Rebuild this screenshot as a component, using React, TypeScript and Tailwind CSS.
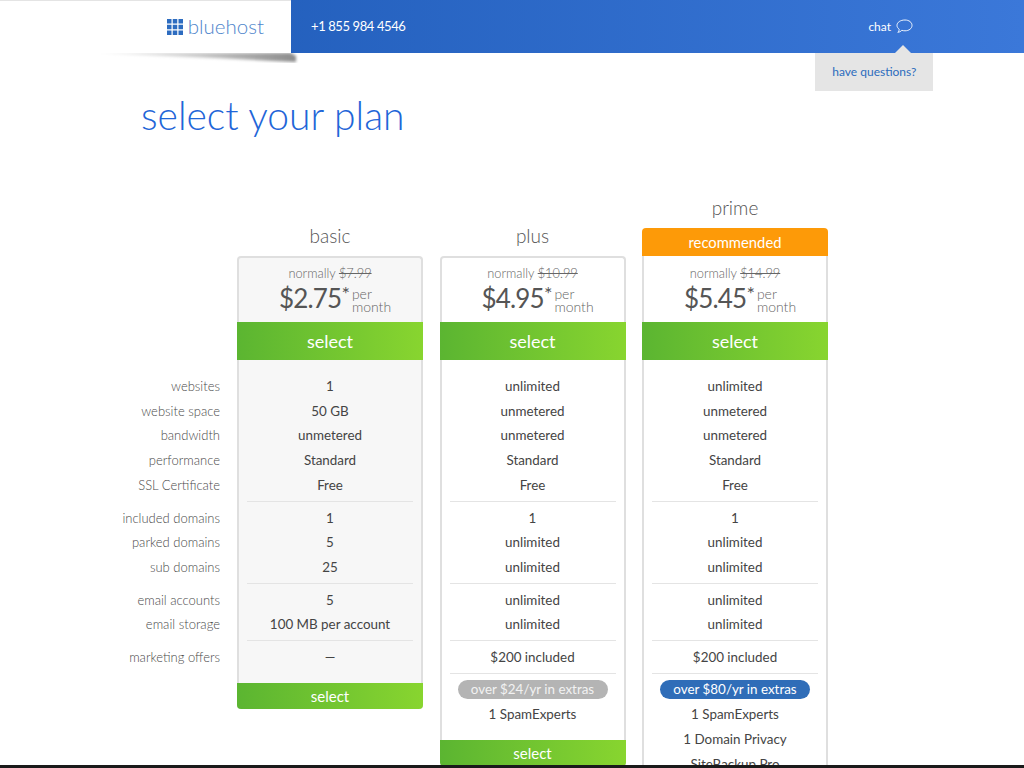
import React from 'react';

type Plan = {
  name: string;
  normally: string;
  price: string;
  highlighted?: boolean;
  shaded?: boolean;
  pill?: { text: string; className: string };
  extras?: string[];
  sections: string[][];
};

const labels = [
  ['websites', 'website space', 'bandwidth', 'performance', 'SSL Certificate'],
  ['included domains', 'parked domains', 'sub domains'],
  ['email accounts', 'email storage'],
  ['marketing offers'],
];

const plans: Plan[] = [
  {
    name: 'basic',
    normally: '$7.99',
    price: '$2.75',
    shaded: true,
    sections: [
      ['1', '50 GB', 'unmetered', 'Standard', 'Free'],
      ['1', '5', '25'],
      ['5', '100 MB per account'],
      ['—'],
    ],
  },
  {
    name: 'plus',
    normally: '$10.99',
    price: '$4.95',
    pill: { text: 'over $24/yr in extras', className: 'bg-[#b4b4b4] text-[#f2f2f2]' },
    extras: ['1 SpamExperts'],
    sections: [
      ['unlimited', 'unmetered', 'unmetered', 'Standard', 'Free'],
      ['1', 'unlimited', 'unlimited'],
      ['unlimited', 'unlimited'],
      ['$200 included'],
    ],
  },
  {
    name: 'prime',
    normally: '$14.99',
    price: '$5.45',
    highlighted: true,
    pill: { text: 'over $80/yr in extras', className: 'bg-[#2f6db8] text-white' },
    extras: ['1 SpamExperts', '1 Domain Privacy', 'SiteBackup Pro'],
    sections: [
      ['unlimited', 'unmetered', 'unmetered', 'Standard', 'Free'],
      ['1', 'unlimited', 'unlimited'],
      ['unlimited', 'unlimited'],
      ['$200 included'],
    ],
  },
];

const Row: React.FC<{ children: React.ReactNode; className?: string }> = ({ children, className = '' }) => (
  <div className={`h-[24.8px] leading-[24.8px] whitespace-nowrap ${className}`}>{children}</div>
);

const SelectButton: React.FC<{ small?: boolean }> = ({ small }) => (
  <div
    className={`bg-gradient-to-r from-[#5bb531] to-[#88d52f] text-center text-white ${
      small
        ? 'h-[26px] text-[15px] leading-[27px] rounded-b-[4px] -mx-[2px]'
        : 'h-[38px] text-[18px] leading-[39px] -mx-[2px]'
    }`}
  >
    select
  </div>
);

const PlanCard: React.FC<{ plan: Plan }> = ({ plan }) => (
  <div className={`w-[186px] flex flex-col ${plan.highlighted ? '' : 'pt-[28px]'}`}>
    <div className="h-[33px] text-center text-[19px] font-light leading-[26px] text-[#555]">{plan.name}</div>
    {plan.highlighted && (
      <div className="h-[28px] rounded-t-[4px] bg-[#fd9a08] text-center text-[14.8px] leading-[28px] text-white">
        recommended
      </div>
    )}
    <div
      className={`border-x-2 border-b-0 border-[#dfdfdf] ${plan.highlighted ? '' : 'border-t-2 rounded-t-[4px]'} ${
        plan.shaded ? 'bg-[#f7f7f7]' : 'bg-white'
      } ${plan.extras ? '' : 'rounded-b-[4px]'}`}
    >
      <div className={`flex flex-col items-center ${plan.highlighted ? 'h-[66px] pt-[8px]' : 'h-[64px] pt-[6px]'}`}>
        <div className="h-[18px] text-[12.8px] font-light leading-[18px] text-[#666]">
          normally <span className="line-through">{plan.normally}</span>
        </div>
        <div className="ml-[10px] -mt-[2px] flex items-start text-[#555]">
          <span className="text-[26px] leading-[36px] tracking-[-0.8px]">{plan.price}</span>
          <span className="text-[20px] leading-[26px]">*</span>
          <span className="ml-[2px] mt-[7px] text-[14px] font-light leading-[13px] text-[#666]">
            per
            <br />
            month
          </span>
        </div>
      </div>
      <SelectButton />
      <div
        className={`px-[8px] pt-[13.9px] text-center text-[13.4px] text-[#444] ${plan.extras ? 'pb-[13px]' : 'pb-[13.3px]'}`}
      >
        {plan.sections.map((rows, i) => (
          <div key={i} className={i > 0 ? 'mt-[3px] border-t border-[#e4e4e4] pt-[3.7px]' : ''}>
            {rows.map((value, j) => (
              <Row key={j}>{value}</Row>
            ))}
          </div>
        ))}
        {plan.pill && (
          <div className="mt-[3px] border-t border-[#e4e4e4] pt-[6.2px]">
            <div className={`mx-[8px] h-[19px] rounded-full text-[13.4px] leading-[19px] ${plan.pill.className}`}>
              {plan.pill.text}
            </div>
            <div className="mt-[3.5px]">
              {plan.extras?.map((extra) => (
                <Row key={extra}>{extra}</Row>
              ))}
            </div>
          </div>
        )}
      </div>
      <SelectButton small />
    </div>
  </div>
);

export default function App() {
  return (
    <div className="flex h-[768px] flex-col overflow-hidden bg-white font-['Lato',sans-serif]">
      <div className="relative min-h-0 flex-1 overflow-hidden">
        {/* header */}
        <header className="relative flex h-[53px] bg-gradient-to-r from-[#1b58b4] to-[#3b78d9]">
          <svg className="absolute left-[90px] top-[53px]" width="215" height="16" viewBox="0 0 215 16">
            <defs>
              <linearGradient id="shade" x1="0" x2="1" y1="0" y2="0">
                <stop offset="0" stopColor="#f4f4f4" />
                <stop offset="0.5" stopColor="#c8c8c8" />
                <stop offset="1" stopColor="#8c8c8c" />
              </linearGradient>
              <filter id="soft">
                <feGaussianBlur stdDeviation="1.4" />
              </filter>
            </defs>
            <path d="M6 0 H201 L206 3 V9 Q110 4 6 0 Z" fill="url(#shade)" filter="url(#soft)" />
          </svg>
          <div className="relative flex h-[53px] w-[291px] items-center justify-end border-t border-[#e4e4e4] bg-white pr-[27px]">
            <svg width="16" height="16" viewBox="0 0 16 16" className="mr-[5px]" fill="#2d6cc0">
              <rect x="0" y="0" width="4.5" height="4.5" />
              <rect x="5.75" y="0" width="4.5" height="4.5" />
              <rect x="11.5" y="0" width="4.5" height="4.5" />
              <rect x="0" y="5.75" width="4.5" height="4.5" />
              <rect x="5.75" y="5.75" width="4.5" height="4.5" />
              <rect x="11.5" y="5.75" width="4.5" height="4.5" />
              <rect x="0" y="11.5" width="4.5" height="4.5" />
              <rect x="5.75" y="11.5" width="4.5" height="4.5" />
              <rect x="11.5" y="11.5" width="4.5" height="4.5" />
            </svg>
            <span className="pb-[2px] text-[20.5px] font-light leading-none text-[#4f86cc]">bluehost</span>
          </div>
          <div className="ml-[20px] flex items-center text-[13px] tracking-[-0.4px] text-white">+1 855 984 4546</div>
          <div className="relative ml-auto mr-[111px] flex items-center text-[12px] text-white">
            chat
            <svg width="17" height="15" viewBox="0 0 17 15" className="ml-[5px]" fill="none" stroke="#ffffff" strokeWidth="0.9">
              <path d="M9 1 C13 1 16 3.3 16 6.4 C16 9.5 13 11.8 9 11.8 C7.8 11.8 6.8 11.6 5.8 11.3 C4.8 12.4 3.4 13.2 1.8 13.3 C2.8 12.4 3.2 11.3 3.2 10.2 C1.8 9.2 1 7.9 1 6.4 C1 3.3 4.4 1 9 1 Z" />
            </svg>
            {/* tooltip */}
            <div className="absolute left-[-53px] top-[53px] h-[38px] w-[118px] bg-[#e5e5e5] text-center text-[12px] leading-[38px] text-[#2c6cbd]">
              <span className="absolute left-[80px] top-[-8px] h-0 w-0 border-x-[8px] border-b-[8px] border-x-transparent border-b-[#e5e5e5]" />
              have questions?
            </div>
          </div>
        </header>

        <h1 className="ml-[141px] mt-[37px] h-[105px] text-[39px] font-light leading-[50px] text-[#1f66d8]">
          select your plan
        </h1>

        <div className="flex items-start pl-[100px]">
          {/* feature labels */}
          <div className="w-[121px] pt-[178.9px] pr-[1px] text-right text-[13px] font-light text-[#4a4a4a]">
            {labels.map((rows, i) => (
              <div key={i} className={i > 0 ? 'mt-[3px] pt-[4.7px]' : ''}>
                {rows.map((label) => (
                  <Row key={label}>{label}</Row>
                ))}
              </div>
            ))}
          </div>
          <div className="ml-[16px] flex gap-[16.5px]">
            {plans.map((plan) => (
              <PlanCard key={plan.name} plan={plan} />
            ))}
          </div>
        </div>
      </div>
      <div className="h-[3px] bg-[#1a1a1a]" />
    </div>
  );
}
